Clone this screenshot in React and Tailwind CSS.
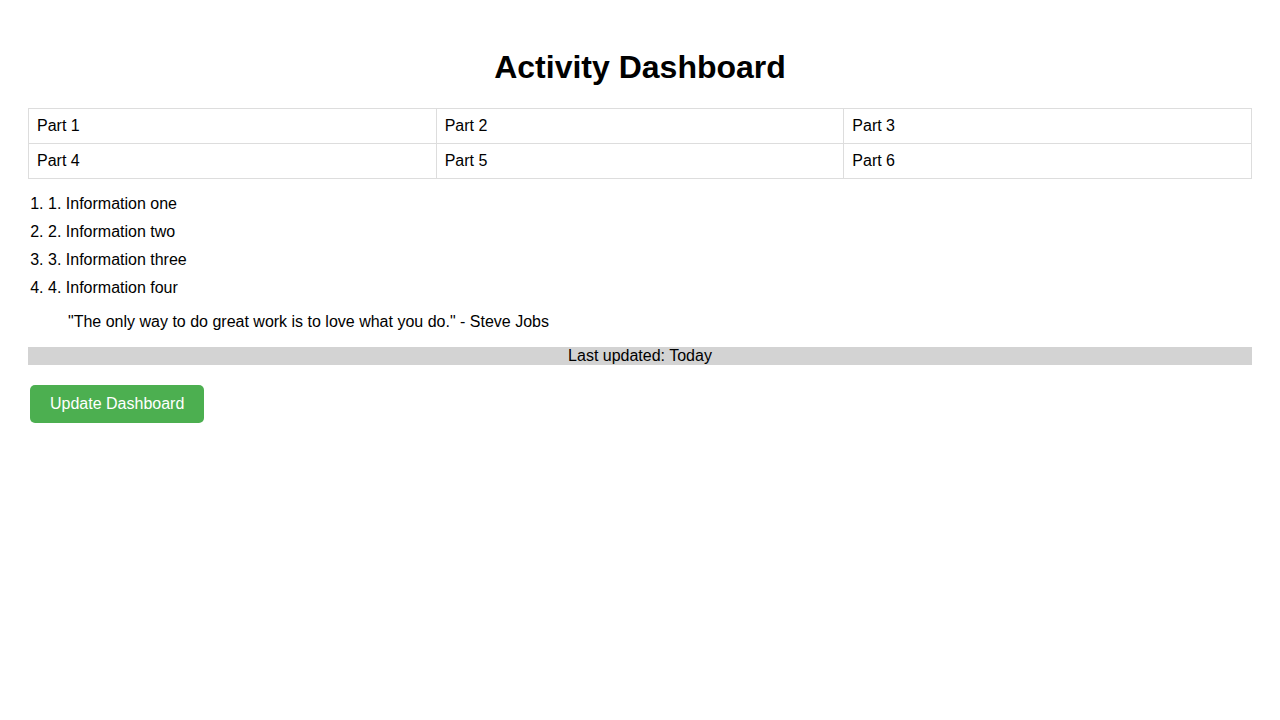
export default function App() {
  const rows = [
    ['Part 1', 'Part 2', 'Part 3'],
    ['Part 4', 'Part 5', 'Part 6'],
  ];
  const items = ['1. Information one', '2. Information two', '3. Information three', '4. Information four'];

  return (
    <div className="m-2 p-5 bg-white text-black text-base leading-[normal]" style={{ fontFamily: '"Liberation Sans", Arial, sans-serif' }}>
      <h1 className="text-[32px] font-bold text-center my-[21.44px]">Activity Dashboard</h1>
      <table className="w-full table-fixed border-collapse">
        <tbody>
          {rows.map((row, i) => (
            <tr key={i}>
              {row.map((cell) => (
                <td key={cell} className="border border-[#dddddd] p-2 text-left">
                  {cell}
                </td>
              ))}
            </tr>
          ))}
        </tbody>
      </table>
      <ol className="list-decimal pl-5 my-4">
        {items.map((item) => (
          <li key={item} className="mb-2.5">{item}</li>
        ))}
      </ol>
      <blockquote className="mx-10 my-4">
        "The only way to do great work is to love what you do." - Steve Jobs
      </blockquote>
      <div className="bg-[#d3d3d3] text-center">Last updated: Today</div>
      <button className="mt-5 ml-[2px] bg-[#4caf50] text-white px-5 py-2.5 rounded-[5px] cursor-pointer">
        Update Dashboard
      </button>
    </div>
  );
}
